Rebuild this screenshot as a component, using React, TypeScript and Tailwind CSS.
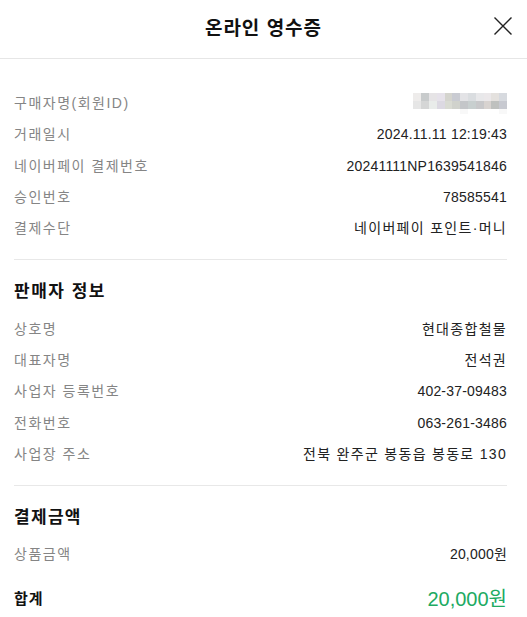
import React from 'react';

const font = { fontFamily: '"Liberation Sans", "Noto Sans CJK KR", sans-serif' };

const buyerRows = [
  { label: '거래일시', value: '2024.11.11 12:19:43' },
  { label: '네이버페이 결제번호', value: '20241111NP1639541846' },
  { label: '승인번호', value: '78585541' },
  { label: '결제수단', value: '네이버페이 포인트·머니', kr: true },
];

const sellerRows = [
  { label: '상호명', value: '현대종합철물', kr: true },
  { label: '대표자명', value: '전석권', kr: true },
  { label: '사업자 등록번호', value: '402-37-09483' },
  { label: '전화번호', value: '063-261-3486' },
  { label: '사업장 주소', value: '전북 완주군 봉동읍 봉동로 130', kr: true },
];

// mosaic over the member id
const mosaic = [
  ['#eeeceb', '#c8cbcc', '#e6e4e6', '#e6e2ea', '#d4d4ce', '#c9cbd2', '#e3e3e6', '#dadde0', '#e8e8ea', '#ebe8ea', '#e4e1de', '#d7dadf'],
  ['#e6e6e6', '#d5d6d6', '#e9ecea', '#dcd9e2', '#d9dbd3', '#d0d2cc', '#c4c6c9', '#c8cfcf', '#c8c8ca', '#d8d3d0', '#bfc1bf', '#c7c9d0'],
  ['#ffffff', '#ffffff', '#ffffff', '#ffffff', '#ffffff', '#ffffff', '#f8f8f8', '#ffffff', '#ffffff', '#ffffff', '#ffffff', '#f8f8f8'],
];

const Row = ({ label, value, kr }: { label: string; value: React.ReactNode; kr?: boolean }) => (
  <div className="flex h-[31.3px] items-center justify-between text-[14px]">
    <span className="tracking-[1.5px] text-[#858585]">{label}</span>
    <span className={kr ? 'tracking-[1.3px] text-[#222222]' : 'tracking-[0.2px] text-[#222222]'}>{value}</span>
  </div>
);

const Blur = () => (
  <div className="flex flex-col">
    {mosaic.map((row, i) => (
      <div key={i} className="flex">
        {row.map((c, j) => (
          <div key={j} className={i === 2 ? 'h-[5px] w-[7.8px]' : 'h-[8px] w-[7.8px]'} style={{ backgroundColor: c }} />
        ))}
      </div>
    ))}
  </div>
);

export default function App() {
  return (
    <div className="h-[617px] w-[527px] overflow-hidden bg-white" style={font}>
      <header className="relative flex h-[59px] items-center justify-center border-b border-[#e6e6e6]">
        <h1 className="text-[19px] font-bold tracking-[1px] text-[#111111]">온라인 영수증</h1>
        <button className="absolute right-[15px] top-[17px]">
          <svg width="18" height="18" viewBox="0 0 18 18" fill="none" stroke="#222" strokeWidth="1.4">
            <path d="M0.5 0.5l17 17M17.5 0.5l-17 17" />
          </svg>
        </button>
      </header>

      <div className="pl-[14px] pr-[20px]">
        <section className="border-b border-[#e8e8e8] pb-[15px] pt-[29px]">
          <div className="flex h-[31.3px] items-center justify-between text-[14px]">
            <span className="tracking-[1.5px] text-[#858585]">구매자명(회원ID)</span>
            <Blur />
          </div>
          {buyerRows.map((r) => (
            <Row key={r.label} {...r} />
          ))}
        </section>

        <section className="border-b border-[#e8e8e8] pb-[15px] pt-[20px]">
          <h2 className="mb-[9px] h-[24px] text-[17px] font-bold leading-[24px] tracking-[1.5px] text-[#111111]">판매자 정보</h2>
          {sellerRows.map((r) => (
            <Row key={r.label} {...r} />
          ))}
        </section>

        <section className="pt-[20px]">
          <h2 className="mb-[9px] h-[24px] text-[17px] font-bold leading-[24px] tracking-[1.3px] text-[#111111]">결제금액</h2>
          <Row label="상품금액" value="20,000원" />
          <div className="mt-[13px] flex h-[31px] items-center justify-between">
            <span className="text-[15px] font-bold tracking-[1px] text-[#111111]">합계</span>
            <span className="text-[20px] text-[#20aa62]">20,000원</span>
          </div>
        </section>
      </div>
    </div>
  );
}
